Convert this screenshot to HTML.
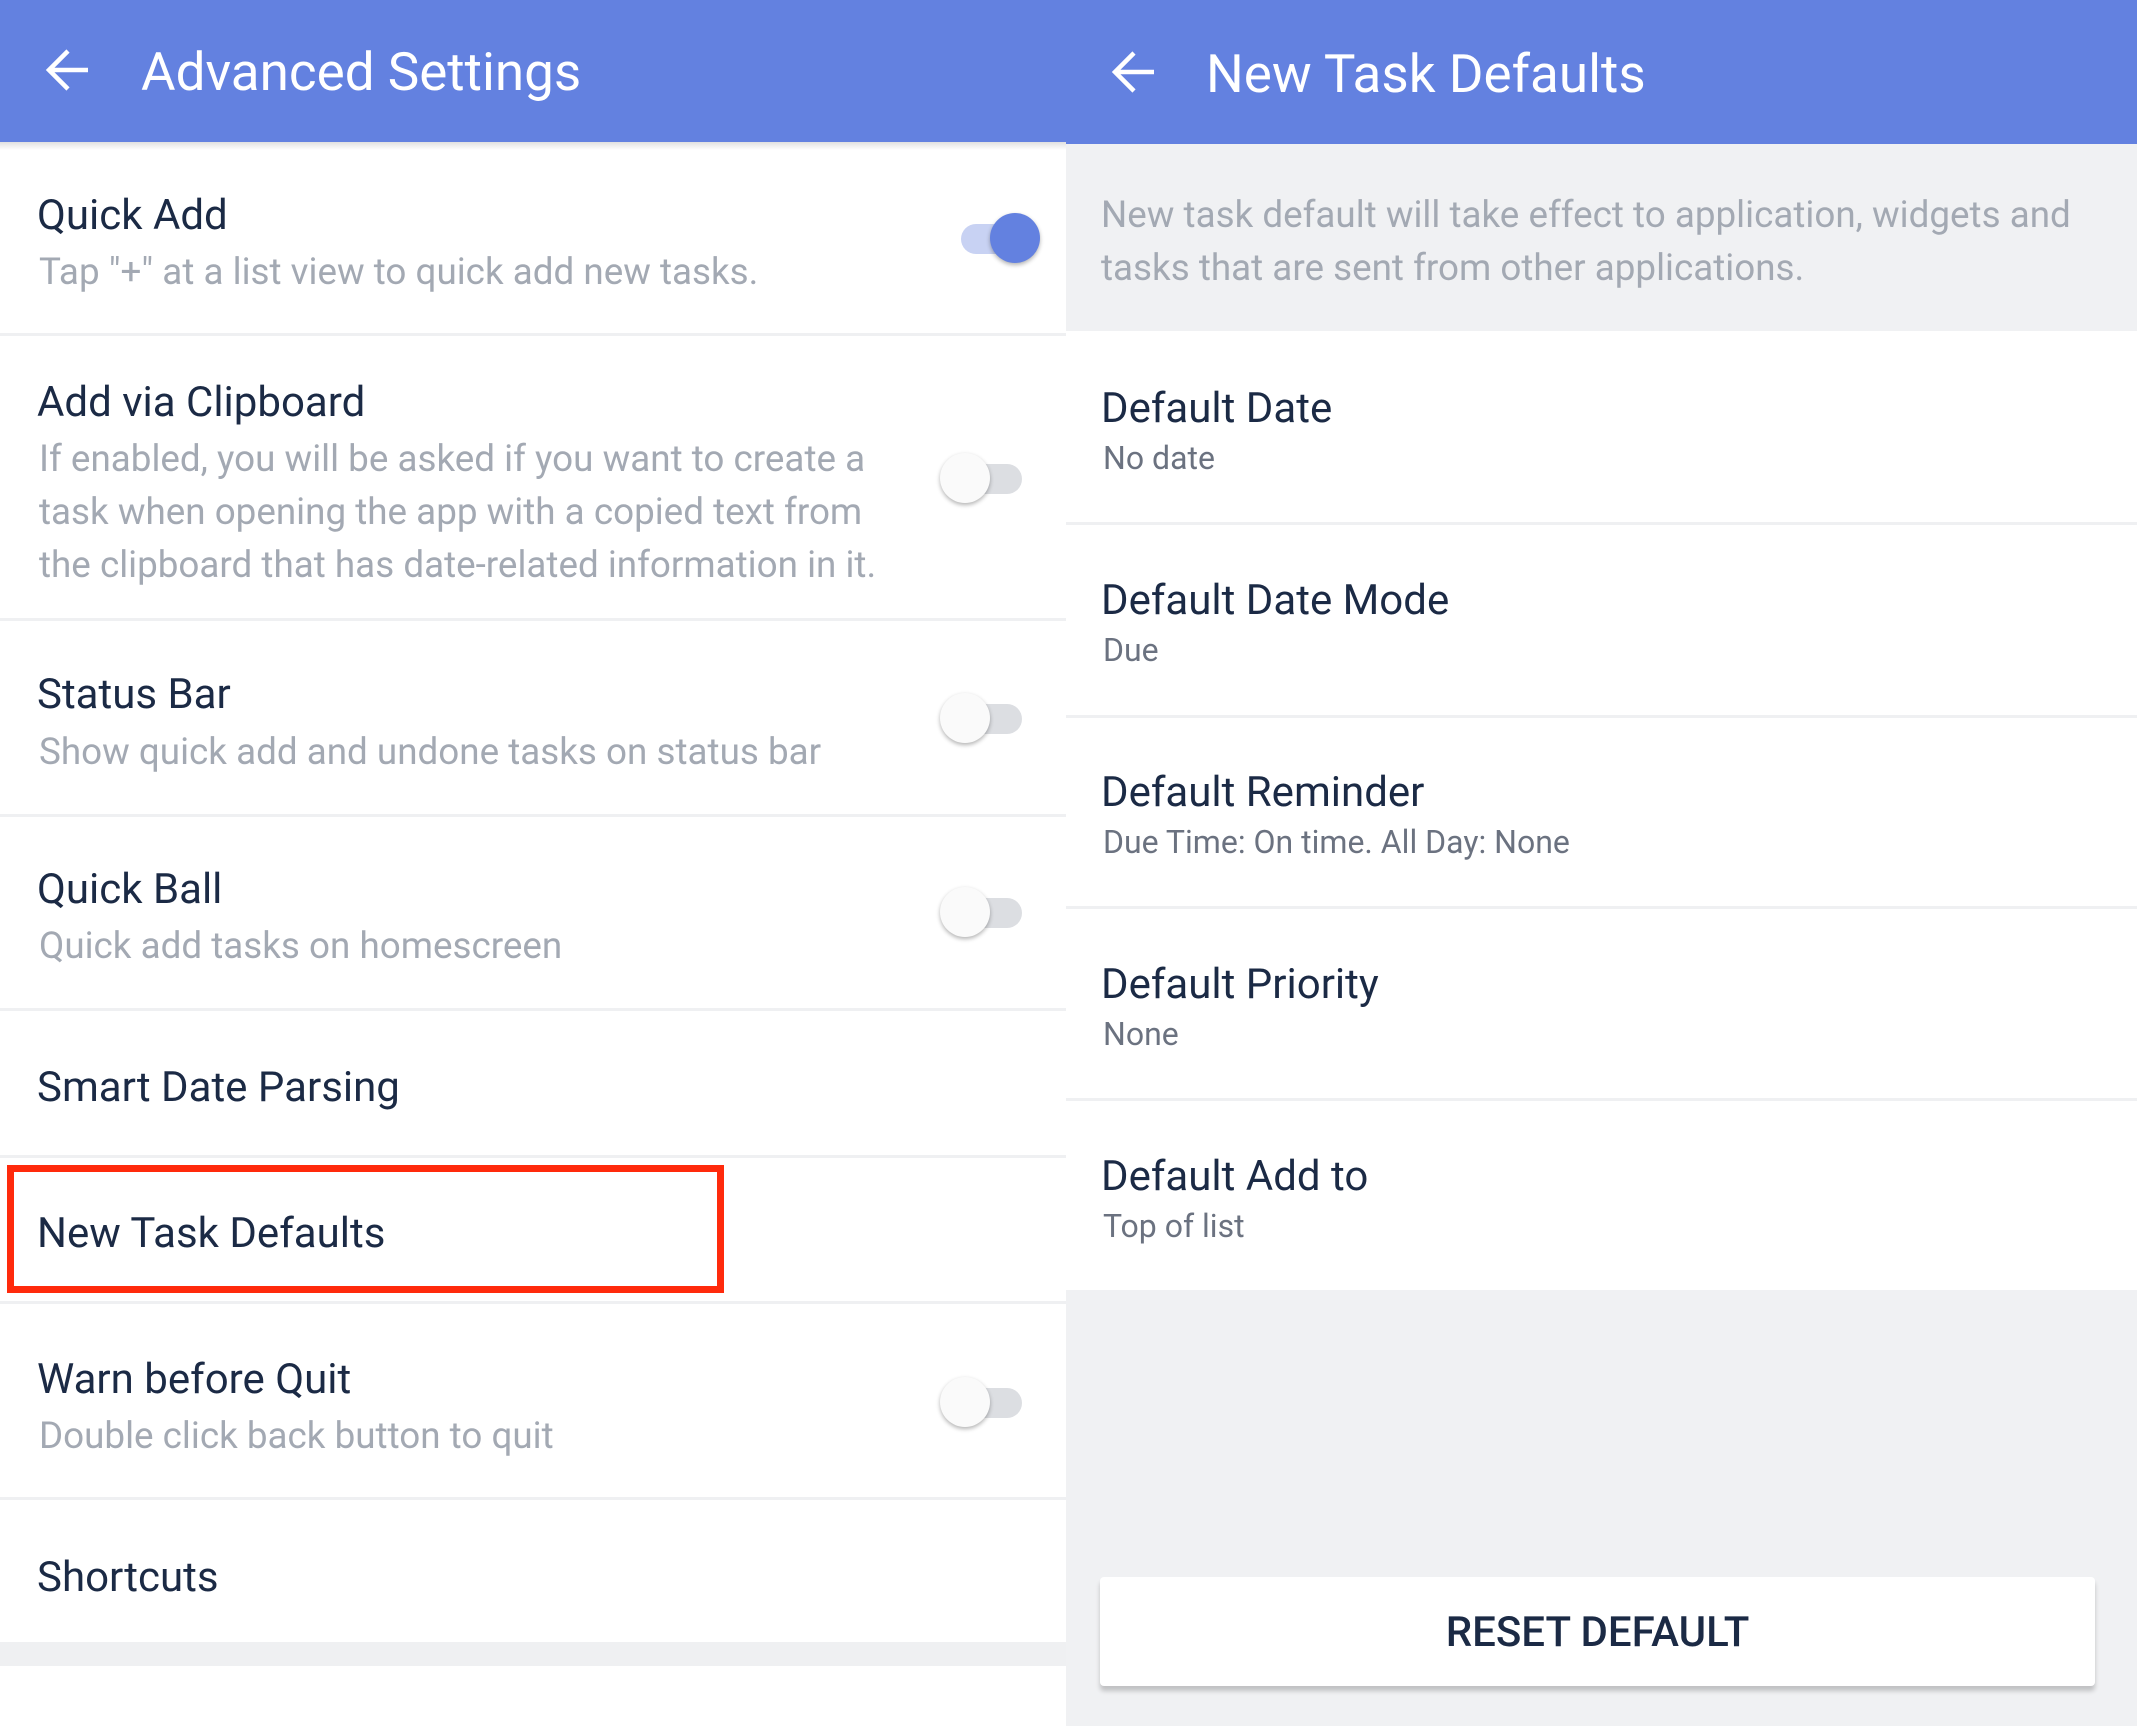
<!DOCTYPE html>
<html><head><meta charset="utf-8"><style>
*{margin:0;padding:0;box-sizing:border-box}
body{width:2137px;height:1726px;position:relative;font-family:"Roboto","Liberation Sans",sans-serif;background:#fff;overflow:hidden}
.abs{position:absolute}
.hdr{background:#6381e0;color:#fff}
.t{position:absolute;left:37px;font-size:42px;color:#1b2a45;white-space:nowrap}
.s{position:absolute;left:39px;font-size:36.8px;color:#a3a9b3;line-height:53px;white-space:nowrap}
.div{position:absolute;left:0;width:1066px;height:3px;background:#eff0f2}
.rdiv{position:absolute;left:1066px;width:1071px;height:3px;background:#eff0f2}
.trk{position:absolute;width:62px;height:30px;border-radius:15px;background:#dcdee2}
.knob{position:absolute;width:50px;height:50px;border-radius:50%;background:#fafafa;box-shadow:0 2px 4px rgba(0,0,0,.3)}
.rt{position:absolute;left:1101px;font-size:42px;color:#1b2a45}
.rs{position:absolute;left:1103px;font-size:32px;color:#6b7280}
</style></head><body>
<div class="abs hdr" style="left:0;top:0;width:1066px;height:142px"></div>
<div class="abs hdr" style="left:1066px;top:0;width:1071px;height:144px"></div>
<svg class="abs" style="left:44px;top:48px" width="48" height="44" viewBox="0 0 48 44"><path d="M44 22H6M24 3L5 22l19 19" stroke="#fff" stroke-width="4.5" fill="none"/></svg>
<div class="abs" style="left:141px;top:41px;font-size:53px;color:#fff">Advanced Settings</div>
<svg class="abs" style="left:1110px;top:50px" width="48" height="44" viewBox="0 0 48 44"><path d="M44 22H6M24 3L5 22l19 19" stroke="#fff" stroke-width="4.5" fill="none"/></svg>
<div class="abs" style="left:1206px;top:43px;font-size:53px;color:#fff">New Task Defaults</div>
<div class="abs" style="left:0;top:142px;width:1066px;height:8px;background:linear-gradient(rgba(0,0,0,.12),rgba(0,0,0,0))"></div>

<div class="t" style="top:191px">Quick Add</div>
<div class="s" style="top:245px">Tap "+" at a list view to quick add new tasks.</div>
<div class="trk" style="left:961px;top:224px;background:#c8d2f3"></div>
<div class="knob" style="left:990px;top:213px;background:#6381e0"></div>
<div class="div" style="top:333px"></div>

<div class="t" style="top:378px">Add via Clipboard</div>
<div class="s" style="top:432px">If enabled, you will be asked if you want to create a<br>task when opening the app with a copied text from<br>the clipboard that has date-related information in it.</div>
<div class="trk" style="left:960px;top:464px"></div><div class="knob" style="left:940px;top:453px"></div>
<div class="div" style="top:618px"></div>

<div class="t" style="top:670px">Status Bar</div>
<div class="s" style="top:725px">Show quick add and undone tasks on status bar</div>
<div class="trk" style="left:960px;top:704px"></div><div class="knob" style="left:940px;top:693px"></div>
<div class="div" style="top:814px"></div>

<div class="t" style="top:865px">Quick Ball</div>
<div class="s" style="top:919px">Quick add tasks on homescreen</div>
<div class="trk" style="left:960px;top:898px"></div><div class="knob" style="left:940px;top:887px"></div>
<div class="div" style="top:1008px"></div>

<div class="t" style="top:1063px">Smart Date Parsing</div>
<div class="div" style="top:1155px"></div>

<div class="t" style="top:1209px">New Task Defaults</div>
<div class="abs" style="left:7px;top:1165px;width:717px;height:128px;border:7px solid #ff2a0c"></div>
<div class="div" style="top:1301px"></div>

<div class="t" style="top:1355px">Warn before Quit</div>
<div class="s" style="top:1409px">Double click back button to quit</div>
<div class="trk" style="left:960px;top:1388px"></div><div class="knob" style="left:940px;top:1377px"></div>
<div class="div" style="top:1497px"></div>

<div class="t" style="top:1553px">Shortcuts</div>
<div class="abs" style="left:0;top:1642px;width:1066px;height:24px;background:#eff0f2"></div>

<div class="abs" style="left:1066px;top:144px;width:1071px;height:187px;background:#f0f1f3"></div>
<div class="abs" style="left:1101px;top:188px;font-size:36.8px;line-height:53px;color:#a3a9b3;white-space:nowrap">New task default will take effect to application, widgets and<br>tasks that are sent from other applications.</div>

<div class="rt" style="top:384px">Default Date</div><div class="rs" style="top:439px">No date</div>
<div class="rdiv" style="top:522px"></div>
<div class="rt" style="top:576px">Default Date Mode</div><div class="rs" style="top:631px">Due</div>
<div class="rdiv" style="top:715px"></div>
<div class="rt" style="top:768px">Default Reminder</div><div class="rs" style="top:823px">Due Time: On time. All Day: None</div>
<div class="rdiv" style="top:906px"></div>
<div class="rt" style="top:960px">Default Priority</div><div class="rs" style="top:1015px">None</div>
<div class="rdiv" style="top:1098px"></div>
<div class="rt" style="top:1152px">Default Add to</div><div class="rs" style="top:1207px">Top of list</div>

<div class="abs" style="left:1066px;top:1290px;width:1071px;height:436px;background:#f0f1f3"></div>
<div class="abs" style="left:1100px;top:1577px;width:995px;height:109px;background:#fff;border-radius:4px;box-shadow:0 5px 5px rgba(0,0,0,.2);text-align:center;line-height:112px;font-size:42px;font-weight:500;color:#1b2a45">RESET DEFAULT</div>
</body></html>
